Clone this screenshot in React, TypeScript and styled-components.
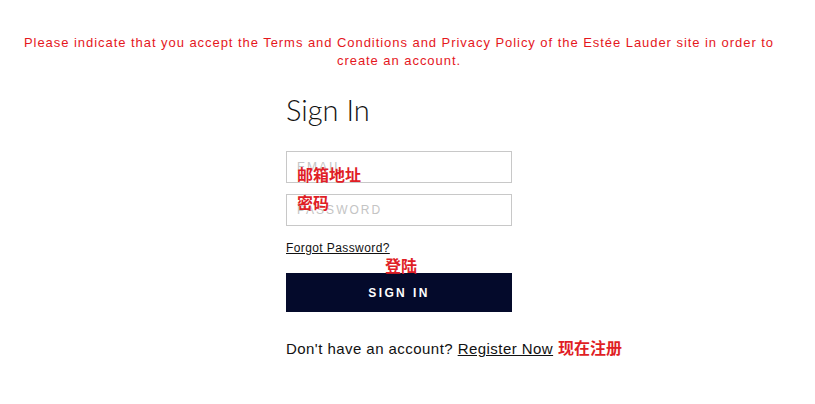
import styled, { createGlobalStyle } from "styled-components";

const GlobalStyle = createGlobalStyle`
  body {
    margin: 0;
    background: #fff;
    font-family: "Liberation Sans", Arial, sans-serif;
  }
`;

const App = () => {
  return (
    <Page>
      <GlobalStyle />
      <ErrorMessage>
        Please indicate that you accept the Terms and Conditions and Privacy
        Policy of the Estée Lauder site in order to create an account.
      </ErrorMessage>
      <FormColumn>
        <Title>Sign In</Title>
        <Field>
          <Input type="text" placeholder="EMAIL" />
          <Note $left={11} $top={14}>邮箱地址</Note>
        </Field>
        <Field>
          <Input type="password" placeholder="PASSWORD" />
          <Note $left={11} $top={-1}>密码</Note>
        </Field>
        <ForgotLink href="#">Forgot Password?</ForgotLink>
        <ButtonWrap>
          <Note $left={99} $top={-17}>登陆</Note>
          <SignInButton>SIGN IN</SignInButton>
        </ButtonWrap>
        <RegisterRow>
          Don't have an account? <RegisterLink href="#">Register Now</RegisterLink>
          <InlineNote>现在注册</InlineNote>
        </RegisterRow>
      </FormColumn>
    </Page>
  );
};

export default App;

const Page = styled.div`
  width: 798px;
  height: 404px;
  padding-top: 34px;
  box-sizing: border-box;
`;

const ErrorMessage = styled.p`
  margin: 0 auto;
  width: 765px;
  text-align: center;
  color: #e5171d;
  font-size: 13px;
  line-height: 18px;
  letter-spacing: 0.95px;
`;

const FormColumn = styled.div`
  width: 226px;
  margin: 22px auto 0;
  display: flex;
  flex-direction: column;
`;

const Title = styled.h1`
  margin: 0 0 23px;
  font-family: Lato, "Open Sans", sans-serif;
  font-weight: 300;
  font-size: 29px;
  line-height: 36px;
  color: #111;
`;

const Field = styled.div`
  position: relative;
  margin-bottom: 11px;
`;

const Input = styled.input`
  width: 100%;
  height: 32px;
  box-sizing: border-box;
  border: 1px solid #c8c8c8;
  padding: 0 10px;
  font-family: "Liberation Sans", Arial, sans-serif;
  font-size: 12px;
  letter-spacing: 2px;
  outline: none;
  &::placeholder {
    color: #c4c4c4;
  }
`;

const Note = styled.span<{ $left: number; $top: number }>`
  position: absolute;
  left: ${(p) => p.$left}px;
  top: ${(p) => p.$top}px;
  color: #e01e26;
  font-family: "Noto Sans CJK SC", sans-serif;
  font-weight: 700;
  font-size: 16px;
  line-height: 18px;
  white-space: nowrap;
`;

const ForgotLink = styled.a`
  margin-top: 3px;
  align-self: flex-start;
  color: #111;
  font-size: 12px;
  line-height: 16px;
  letter-spacing: 0.4px;
  text-decoration: underline;
`;

const ButtonWrap = styled.div`
  position: relative;
  margin-top: 17px;
`;

const SignInButton = styled.button`
  width: 100%;
  height: 39px;
  border: none;
  background: #040a2b;
  color: #fff;
  font-family: "Liberation Sans", Arial, sans-serif;
  font-weight: 700;
  font-size: 12px;
  letter-spacing: 2.4px;
  cursor: pointer;
`;

const RegisterRow = styled.div`
  margin-top: 25px;
  white-space: nowrap;
  color: #111;
  font-size: 15px;
  line-height: 20px;
  letter-spacing: 0.45px;
`;

const RegisterLink = styled.a`
  color: #111;
  text-decoration: underline;
`;

const InlineNote = styled.span`
  margin-left: 5px;
  color: #e01e26;
  font-family: "Noto Sans CJK SC", sans-serif;
  font-weight: 700;
  font-size: 16px;
  letter-spacing: 0;
`;
